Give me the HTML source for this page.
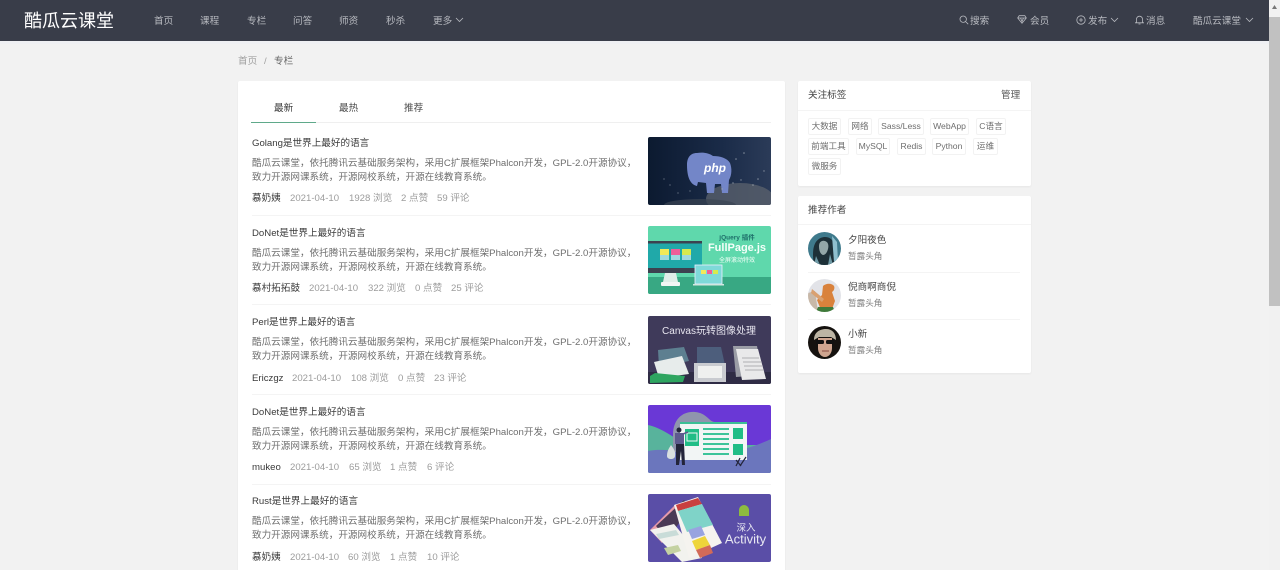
<!DOCTYPE html>
<html lang="zh-CN"><head><meta charset="utf-8"><title>专栏 - 酷瓜云课堂</title>
<style>
*{box-sizing:border-box}
html{margin:0;padding:0;width:1280px;height:570px;overflow:hidden}
body{margin:0;padding:0;width:1280px;height:570px;overflow:hidden;background:#f2f2f2;position:relative;font-family:"Liberation Sans","Noto Sans CJK SC",sans-serif;font-size:9.6px;color:#666}
.t{position:absolute;white-space:nowrap;line-height:14px;margin-top:1px}
#hd{position:absolute;left:0;top:0;width:1269px;height:41px;background:#393d49}
#hs{position:absolute;left:0;top:41px;width:1269px;height:3px;background:#eff0f3}
.n{position:absolute;top:14px;line-height:14px;margin-top:.5px;color:#b8bac0;white-space:nowrap}
#sb{position:absolute;left:1269px;top:0;width:11px;height:570px;background:#f1f1f1}
#th{position:absolute;left:0;top:17px;width:11px;height:289px;background:#c1c1c1}
.card{position:absolute;background:#fff;border-radius:2px;box-shadow:0 1px 2px rgba(0,0,0,.05)}
.ti{color:#3a3a3a}
.bd{color:#6e6e6e}
.au{color:#3a3a3a}
.me{color:#9c9c9c}
.ln{position:absolute;height:1px;background:#f4f4f4}
.th{position:absolute;left:648px;width:123px;height:68px;border-radius:2px;overflow:hidden;display:block}
.tag{position:absolute;height:17px;line-height:15px;border:1px solid #f2f2f2;border-radius:2px;font-size:8.6px;color:#6e6e6e;text-align:center;white-space:nowrap}
.av{position:absolute;left:808px;width:33px;height:33px;border-radius:50%;overflow:hidden;display:block}
.nm{color:#444}.t.sub{color:#808080;font-size:8.6px;margin-top:-.5px}
svg{display:block}
</style></head><body>
<div id="hd"></div><div id="hs"></div>
<div class="t" style="left:24px;top:8px;font-size:18px;line-height:24px;color:#fff">酷瓜云课堂</div>
<div class="n" style="left:154px">首页</div>
<div class="n" style="left:200px">课程</div>
<div class="n" style="left:247px">专栏</div>
<div class="n" style="left:293px">问答</div>
<div class="n" style="left:339px">师资</div>
<div class="n" style="left:386px">秒杀</div>
<div class="n" style="left:433px">更多</div>
<svg style="position:absolute;left:455px;top:17px" width="9" height="6" viewBox="0 0 9 6" fill="none" stroke="#b8bac0" stroke-width=".8"><path d="M1 1l3.500 3.500L8 1"/></svg>

<svg style="position:absolute;left:959px;top:15px" width="10" height="10" viewBox="0 0 10 10" fill="none" stroke="#b8bac0" stroke-width=".8"><circle cx="4.200" cy="4.200" r="3.200"/><path d="M6.600 6.600L9.200 9.200"/></svg>
<div class="n" style="left:970px">搜索</div>
<svg style="position:absolute;left:1017px;top:15px" width="10" height="9" viewBox="0 0 10 9" fill="none" stroke="#b8bac0" stroke-width=".8"><path d="M2.200.7h5.600L9.300 3 5 8.200.7 3zM.7 3h8.600M3.500 3L5 6.500 6.500 3"/></svg>
<div class="n" style="left:1030px">会员</div>
<svg style="position:absolute;left:1076px;top:15px" width="10" height="10" viewBox="0 0 10 10" fill="none" stroke="#b8bac0" stroke-width=".8"><circle cx="5" cy="5" r="4.200"/><path d="M5 3v4M3 5h4"/></svg>
<div class="n" style="left:1088px">发布</div>
<svg style="position:absolute;left:1110px;top:17px" width="9" height="6" viewBox="0 0 9 6" fill="none" stroke="#b8bac0" stroke-width=".8"><path d="M1 1l3.500 3.500L8 1"/></svg>
<svg style="position:absolute;left:1135px;top:15px" width="9" height="10" viewBox="0 0 9 10" fill="none" stroke="#b8bac0" stroke-width=".8"><path d="M1.500 7V4.200a3 3 0 0 1 6 0V7l1 .8H.5zM3.500 9h2"/></svg>
<div class="n" style="left:1146px">消息</div>
<div class="n" style="left:1193px">酷瓜云课堂</div>
<svg style="position:absolute;left:1245px;top:17px" width="9" height="6" viewBox="0 0 9 6" fill="none" stroke="#b8bac0" stroke-width=".8"><path d="M1 1l3.500 3.500L8 1"/></svg>

<div id="sb"><div id="th"></div><svg style="position:absolute;left:3px;top:5px" width="5" height="4"><path d="M2.500 0L5 4H0z" fill="#777"/></svg></div>

<div class="t" style="left:238px;top:54px;color:#a0a0a0">首页</div>
<div class="t" style="left:264px;top:54px;color:#a0a0a0">/</div>
<div class="t" style="left:274px;top:54px;color:#666">专栏</div>

<div class="card" style="left:238px;top:81px;width:547px;height:489px;border-radius:2px 2px 0 0"></div>
<div class="t" style="left:274px;top:101px;color:#3a3a3a">最新</div>
<div class="t" style="left:339px;top:101px;color:#4a4a4a">最热</div>
<div class="t" style="left:404px;top:101px;color:#4a4a4a">推荐</div>
<div class="ln" style="left:251px;top:122px;width:520px;background:#efefef"></div>
<div class="ln" style="left:251px;top:121.500px;width:65px;height:1.500px;background:#5fa98a"></div>

<!-- Row 1 -->
<div class="t ti" style="left:252px;top:136px">Golang是世界上最好的语言</div>
<div class="t bd" style="left:252px;top:156px">酷瓜云课堂，依托腾讯云基础服务架构，采用C扩展框架Phalcon开发，GPL-2.0开源协议，</div>
<div class="t bd" style="left:252px;top:170px">致力开源网课系统，开源网校系统，开源在线教育系统。</div>
<div class="t au" style="left:252px;top:191px">慕奶姨</div>
<div class="t me" style="left:290px;top:191px">2021-04-10</div>
<div class="t me" style="left:349px;top:191px">1928 浏览</div>
<div class="t me" style="left:401px;top:191px">2 点赞</div>
<div class="t me" style="left:437px;top:191px">59 评论</div>
<div class="ln" style="left:252px;top:215px;width:519px"></div>
<svg class="th" style="top:137px" viewBox="0 0 123 68">
<defs><linearGradient id="g1" x1="0" y1="0" x2="1" y2="0"><stop offset="0" stop-color="#0c1a30"/><stop offset=".6" stop-color="#1a2b48"/><stop offset="1" stop-color="#2b3b58"/></linearGradient></defs>
<rect width="123" height="68" fill="url(#g1)"/>
<ellipse cx="92" cy="62" rx="34" ry="16" fill="#5c636e" opacity=".75"/>
<ellipse cx="52" cy="68" rx="36" ry="6" fill="#3a4452" opacity=".7"/>
<path d="M39 28c0-7 3-12 10-12 6-1 12 0 16 3 7 0 14 2 17 7 2 5 2 12-1 17l-1 13h-6l-1-9-6 0-1 9h-7l-1-10-8-1-1 4c-5-1-10-6-10-21z" fill="#7386c8"/>
<text x="56" y="35" font-family="Liberation Sans,sans-serif" font-style="italic" font-weight="700" font-size="12" fill="#fff">php</text>
<g fill="#aab2bc" opacity=".7"><circle cx="22" cy="48" r=".6"/><circle cx="16" cy="42" r=".6"/><circle cx="30" cy="56" r=".6"/><circle cx="42" cy="54" r=".6"/><circle cx="88" cy="22" r=".8"/><circle cx="96" cy="16" r=".8"/><circle cx="110" cy="42" r=".8"/><circle cx="105" cy="48" r=".8"/><circle cx="85" cy="46" r=".7"/><circle cx="93" cy="43" r=".7"/><circle cx="74" cy="52" r=".7"/><circle cx="116" cy="34" r=".7"/></g>
</svg>

<!-- Row 2 -->
<div class="t ti" style="left:252px;top:225.500px">DoNet是世界上最好的语言</div>
<div class="t bd" style="left:252px;top:245.500px">酷瓜云课堂，依托腾讯云基础服务架构，采用C扩展框架Phalcon开发，GPL-2.0开源协议，</div>
<div class="t bd" style="left:252px;top:259.500px">致力开源网课系统，开源网校系统，开源在线教育系统。</div>
<div class="t au" style="left:252px;top:281px">慕村拓拓鼓</div>
<div class="t me" style="left:309px;top:281px">2021-04-10</div>
<div class="t me" style="left:368px;top:281px">322 浏览</div>
<div class="t me" style="left:415px;top:281px">0 点赞</div>
<div class="t me" style="left:451px;top:281px">25 评论</div>
<div class="ln" style="left:252px;top:304px;width:519px"></div>
<svg class="th" style="top:226px" viewBox="0 0 123 68">
<rect width="123" height="68" fill="#5fd8ac"/><rect y="51" width="123" height="17" fill="#38a883"/>
<rect y="15" width="54" height="32" fill="#20a9a9"/><rect y="42" width="54" height="5" fill="#3c4250"/><rect y="15" width="54" height="2.500" fill="#3c4250"/>
<rect x="12" y="23" width="9" height="6" fill="#f2e95a"/><rect x="23" y="23" width="9" height="6" fill="#ef5f99"/><rect x="34" y="23" width="9" height="6" fill="#d7ea4e"/>
<rect x="12" y="29" width="9" height="5" fill="#9fd9df"/><rect x="23" y="29" width="9" height="5" fill="#9fd9df"/><rect x="34" y="29" width="9" height="5" fill="#9fd9df"/>
<path d="M17 47h11l2 9H15z" fill="#dfeee8"/><rect x="13" y="56" width="19" height="4" rx="1" fill="#f2f5f4"/>
<rect x="47" y="39" width="27" height="19" fill="#7fd9d9" stroke="#eef" stroke-width=".8"/><rect x="45" y="58" width="31" height="1.500" fill="#d3e6e0"/>
<rect x="53" y="44" width="5" height="4" fill="#f2e95a"/><rect x="59" y="44" width="5" height="4" fill="#ef5f99"/><rect x="65" y="44" width="5" height="4" fill="#d7ea4e"/>
<text x="89" y="13.500" text-anchor="middle" font-size="6.500" font-weight="700" fill="#1e6f6a" font-family="Liberation Sans,Noto Sans CJK SC,sans-serif">jQuery 插件</text>
<text x="89" y="25" text-anchor="middle" font-size="11" font-weight="700" fill="#f4fff9" font-family="Liberation Sans,sans-serif">FullPage.js</text>
<text x="89" y="36" text-anchor="middle" font-size="6" fill="#f4fff9" font-family="Liberation Sans,Noto Sans CJK SC,sans-serif">全屏滚动特效</text>
</svg>

<!-- Row 3 -->
<div class="t ti" style="left:252px;top:315px">Perl是世界上最好的语言</div>
<div class="t bd" style="left:252px;top:335px">酷瓜云课堂，依托腾讯云基础服务架构，采用C扩展框架Phalcon开发，GPL-2.0开源协议，</div>
<div class="t bd" style="left:252px;top:349px">致力开源网课系统，开源网校系统，开源在线教育系统。</div>
<div class="t au" style="left:252px;top:370.500px">Ericzgz</div>
<div class="t me" style="left:292px;top:370.500px">2021-04-10</div>
<div class="t me" style="left:351px;top:370.500px">108 浏览</div>
<div class="t me" style="left:398px;top:370.500px">0 点赞</div>
<div class="t me" style="left:434px;top:370.500px">23 评论</div>
<div class="ln" style="left:252px;top:394px;width:519px"></div>
<svg class="th" style="top:316px" viewBox="0 0 123 68">
<rect width="123" height="68" fill="#3f3a5a"/>
<rect y="56" width="123" height="12" fill="#2f2c45"/>
<text x="61" y="18" text-anchor="middle" font-size="10" fill="#e8e6f0" font-family="Liberation Sans,Noto Sans CJK SC,sans-serif">Canvas玩转图像处理</text>
<path d="M10 34l26-3 5 14-30 6z" fill="#5d7f90"/><path d="M6 46l28-6 7 18-30 4z" fill="#e7eceb"/><path d="M2 60l5-3 30 3-2 6-33 1z" fill="#2ea560"/>
<path d="M49 31h24l4 18-28 2z" fill="#4d5e7c"/><rect x="46" y="47" width="32" height="19" fill="#c9cbd0"/><rect x="50" y="50" width="24" height="12" fill="#eff0ef"/>
<path d="M85 30h24l5 29-26 2z" fill="#9b9da6"/><path d="M88 33h22l8 30-24 1z" fill="#e9e9ea"/>
<g stroke="#9a9aa0" stroke-width=".7"><path d="M94 42h17M95 46h18M96 50h18M97 54h18"/></g>
</svg>

<!-- Row 4 -->
<div class="t ti" style="left:252px;top:404.500px">DoNet是世界上最好的语言</div>
<div class="t bd" style="left:252px;top:424.500px">酷瓜云课堂，依托腾讯云基础服务架构，采用C扩展框架Phalcon开发，GPL-2.0开源协议，</div>
<div class="t bd" style="left:252px;top:438.500px">致力开源网课系统，开源网校系统，开源在线教育系统。</div>
<div class="t au" style="left:252px;top:460px">mukeo</div>
<div class="t me" style="left:290px;top:460px">2021-04-10</div>
<div class="t me" style="left:349px;top:460px">65 浏览</div>
<div class="t me" style="left:390px;top:460px">1 点赞</div>
<div class="t me" style="left:427px;top:460px">6 评论</div>
<div class="ln" style="left:252px;top:484px;width:519px"></div>
<svg class="th" style="top:405px" viewBox="0 0 123 68">
<rect width="123" height="68" fill="#6a38d6"/>
<path d="M0 20c14 3 24 12 40 20h83v28H0z" fill="#58b39c"/>
<path d="M0 46c20-4 40 4 70 2 22-1 40-8 53-14v34H0z" fill="#6b76bd"/>
<path d="M25 30c0-16 10-24 22-23 12 1 14 10 20 10h5v30H25z" fill="#8f94ad"/>
<rect x="32" y="17" width="67" height="38" fill="#f2f5f5"/><rect x="32" y="17" width="67" height="2" fill="#3cbf96"/>
<rect x="37" y="24" width="14" height="17" fill="#20bd86"/><rect x="39" y="28" width="10" height="8" fill="none" stroke="#f2f5f5"/>
<g fill="#3cc49a"><rect x="55" y="23" width="26" height="2"/><rect x="55" y="28" width="26" height="2"/><rect x="55" y="33" width="26" height="2"/><rect x="55" y="38" width="26" height="2"/><rect x="55" y="43" width="26" height="2"/><rect x="55" y="48" width="26" height="2"/></g>
<rect x="85" y="23" width="10" height="11" fill="#20bd86"/><rect x="85" y="39" width="10" height="11" fill="#20bd86"/>
<path d="M28 38h8l1 22h-3l-1-14-2 14h-3z" fill="#23243a"/><circle cx="31" cy="25" r="2.500" fill="#23243a"/><rect x="27" y="28" width="9" height="11" fill="#5d5a8e"/><path d="M35 29l5-2" stroke="#5d5a8e" stroke-width="1.500"/>
<path d="M19 51c0-6 3-9 4-11 2 3 5 6 4 11 0 2-2 3-4 3s-4-1-4-3z" fill="#d8dfe0"/>
<path d="M88 61l4-8M92 61l6-9M88 55l5 6" stroke="#23243a" stroke-width="1.200"/>
</svg>

<!-- Row 5 -->
<div class="t ti" style="left:252px;top:494px">Rust是世界上最好的语言</div>
<div class="t bd" style="left:252px;top:514px">酷瓜云课堂，依托腾讯云基础服务架构，采用C扩展框架Phalcon开发，GPL-2.0开源协议，</div>
<div class="t bd" style="left:252px;top:528px">致力开源网课系统，开源网校系统，开源在线教育系统。</div>
<div class="t au" style="left:252px;top:549.500px">慕奶姨</div>
<div class="t me" style="left:290px;top:549.500px">2021-04-10</div>
<div class="t me" style="left:348px;top:549.500px">60 浏览</div>
<div class="t me" style="left:390px;top:549.500px">1 点赞</div>
<div class="t me" style="left:427px;top:549.500px">10 评论</div>
<svg class="th" style="top:494px" viewBox="0 0 123 68">
<rect width="123" height="68" fill="#5a4ea7"/>
<path d="M2 36L28 10l6 5-20 34z" fill="#e69aa9"/><path d="M8 32L36 6l6 6-22 34z" fill="#4a3a55"/>
<path d="M2 36l24-6 28 34-20 4z" fill="#f2f2ee"/>
<path d="M26 11L50 3l24 46-33 15z" fill="#f5f3ef"/><path d="M28 11L50 4l4 6-24 7z" fill="#c9403f"/>
<path d="M30 17l24-7 11 21-26 7z" fill="#7fd3c8"/>
<path d="M40 36l13-4 4 9-13 4z" fill="#98a3e0"/><path d="M44 47l13-5 5 9-14 5z" fill="#eed53a"/><path d="M48 56l14-5 3 8-13 5z" fill="#d26a58"/>
<path d="M8 40l20-4 3 5-20 4z" fill="#c9dcd8"/><path d="M16 54l14-3 3 6-13 4z" fill="#c4d2a2"/>
<path d="M91 16a5 5 0 0 1 10 0v6h-10z" fill="#8dbb3f"/>
<text x="98" y="37" text-anchor="middle" font-size="9.500" fill="#e8e8f2" font-family="Liberation Sans,Noto Sans CJK SC,sans-serif">深入</text>
<text x="97.500" y="49.500" text-anchor="middle" font-size="13" fill="#e8e8f2" font-family="Liberation Sans,sans-serif">Activity</text>
</svg>

<!-- Tags card -->
<div class="card" style="left:798px;top:81px;width:233px;height:105px"></div>
<div class="t" style="left:808px;top:88px;color:#444">关注标签</div>
<div class="t" style="left:1001px;top:87.500px;color:#555">管理</div>
<div class="ln" style="left:798px;top:110px;width:233px"></div>
<div class="tag" style="left:808px;top:118px;width:33px">大数据</div>
<div class="tag" style="left:848px;top:118px;width:24px">网络</div>
<div class="tag" style="left:878px;top:118px;width:46px">Sass/Less</div>
<div class="tag" style="left:930px;top:118px;width:39px">WebApp</div>
<div class="tag" style="left:976px;top:118px;width:30px">C语言</div>
<div class="tag" style="left:808px;top:138px;width:41px">前端工具</div>
<div class="tag" style="left:856px;top:138px;width:34px">MySQL</div>
<div class="tag" style="left:897px;top:138px;width:29px">Redis</div>
<div class="tag" style="left:932px;top:138px;width:34px">Python</div>
<div class="tag" style="left:973px;top:138px;width:25px">运维</div>
<div class="tag" style="left:808px;top:158px;width:33px">微服务</div>

<!-- Authors card -->
<div class="card" style="left:798px;top:196px;width:233px;height:177px"></div>
<div class="t" style="left:808px;top:203px;color:#444">推荐作者</div>
<div class="ln" style="left:798px;top:224px;width:233px"></div>

<svg class="av" style="top:232px" viewBox="0 0 33 33"><rect width="33" height="33" fill="#3f7a8c"/><path d="M6 33c-2-12-2-26 10-28 11-1 13 12 11 28z" fill="#1d3038"/><path d="M11 14c0-4 3-6 6-5 3 1 4 4 3 8-1 4-3 6-5 6-3-1-4-5-4-9z" fill="#93a7a9"/><path d="M24 4l5 6 1 20-4 0z" fill="#8fc0cf"/><path d="M8 24l4 9h-6zM22 22l3 11h-5z" fill="#6f9aa6"/></svg>
<div class="t nm" style="left:848px;top:233px">夕阳夜色</div>
<div class="t sub" style="left:848px;top:249.500px">暂露头角</div>
<div class="ln" style="left:808px;top:272px;width:212px"></div>

<svg class="av" style="top:279px" viewBox="0 0 33 33"><rect width="33" height="33" fill="#e2e3e8"/><path d="M0 33V14l7-2 3 21z" fill="#c8b8a8"/><path d="M15 7c3-3 9-3 11 0 1 2 0 5-2 6l3 9-3 8-11 1-4-10 5-5z" fill="#d9823c"/><path d="M10 28l15 0 2 5H8z" fill="#3f7a3a"/><path d="M4 10l12 10-2 3L3 14z" fill="#d9a070"/></svg>
<div class="t nm" style="left:848px;top:280px">倪商啊商倪</div>
<div class="t sub" style="left:848px;top:296.500px">暂露头角</div>
<div class="ln" style="left:808px;top:319px;width:212px"></div>

<svg class="av" style="top:326px" viewBox="0 0 33 33"><rect width="33" height="33" fill="#15120f"/><path d="M6 14c0-8 6-11 12-11s10 4 10 11l-5-3H11z" fill="#bdb5a4"/><path d="M10 12h14v10c0 5-3 9-7 9s-7-4-7-9z" fill="#cfa58f"/><rect x="8" y="14" width="8" height="4" rx="1.500" fill="#111"/><rect x="18" y="14" width="8" height="4" rx="1.500" fill="#111"/><path d="M14 25h7" stroke="#8a4a40"/></svg>
<div class="t nm" style="left:848px;top:327px">小新</div>
<div class="t sub" style="left:848px;top:343.500px">暂露头角</div>
</body></html>
